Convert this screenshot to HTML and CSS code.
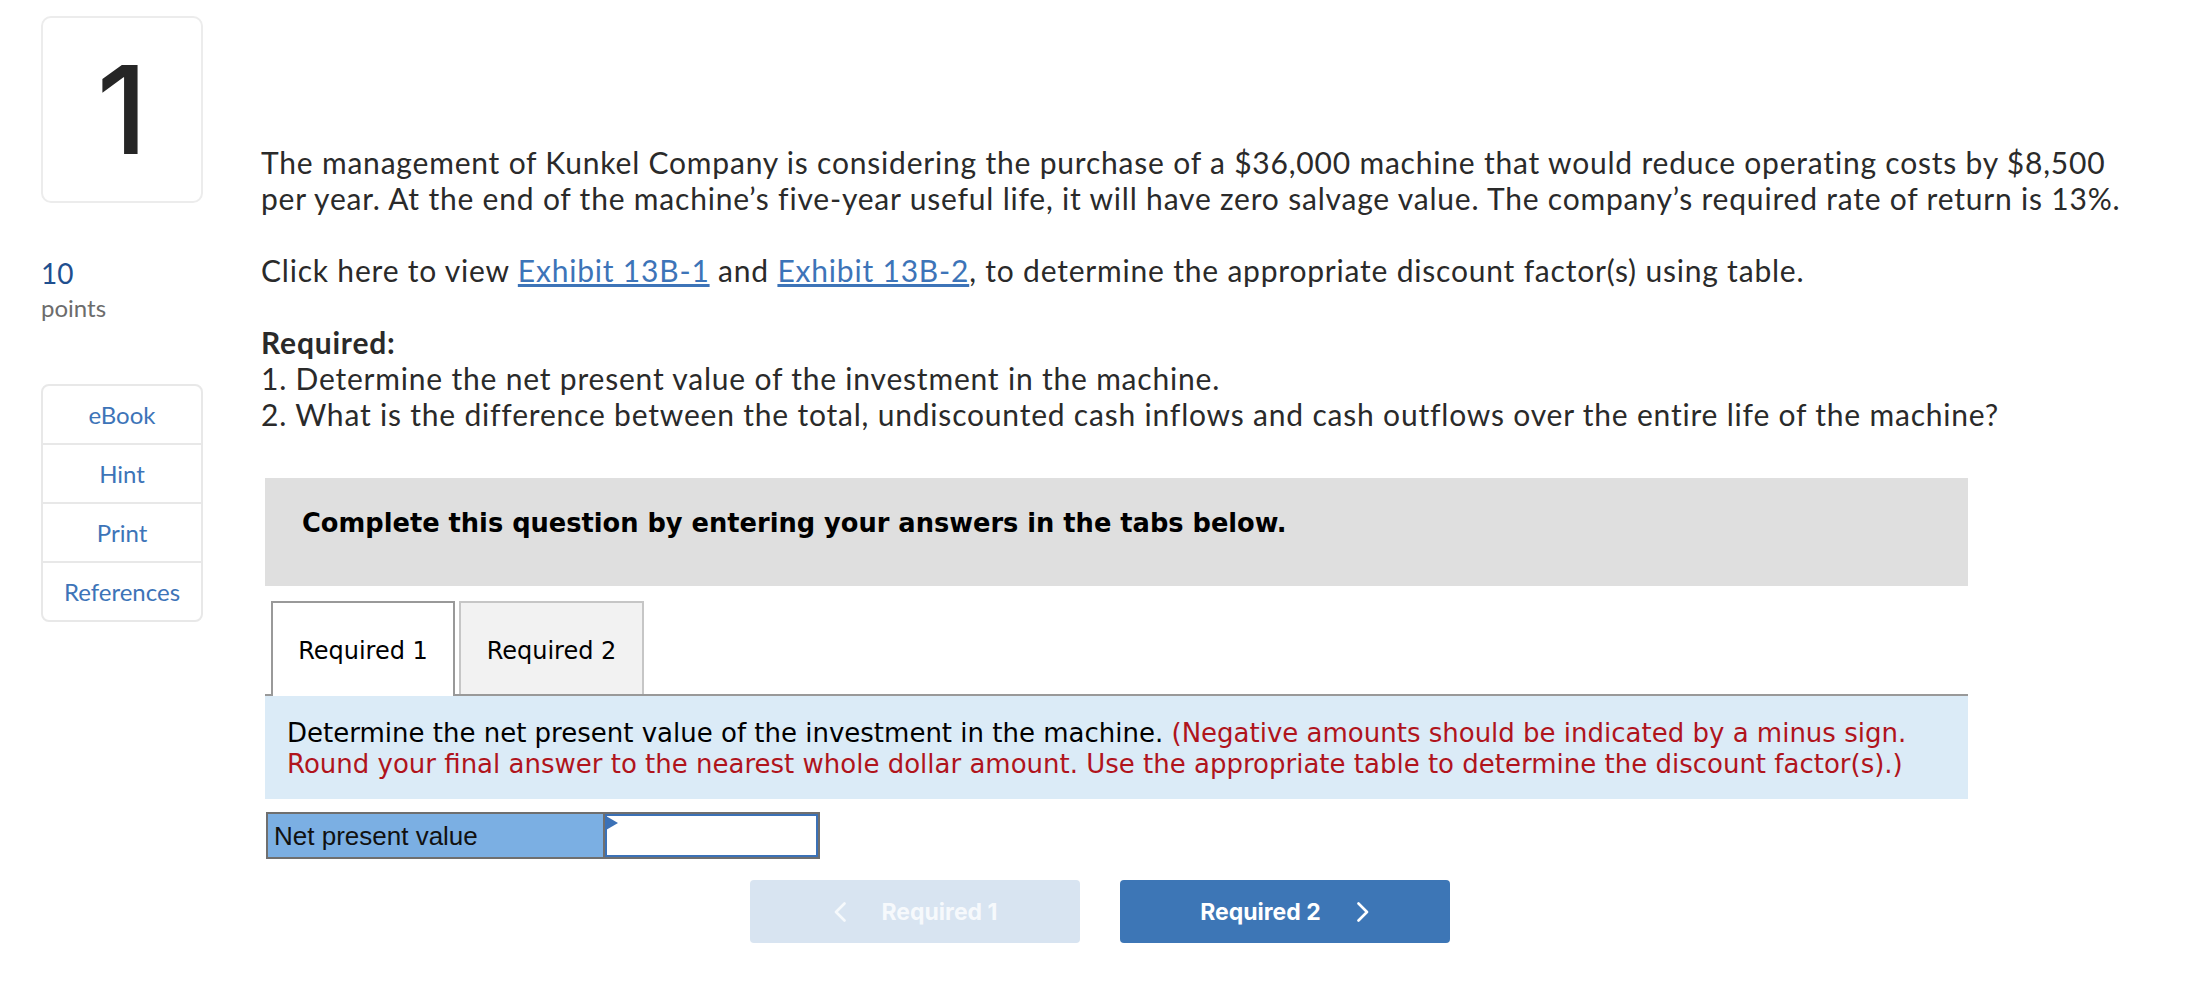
FILE: index.html
```html
<!DOCTYPE html>
<html lang="en">
<head>
<meta charset="utf-8">
<title>Question 1</title>
<link rel="stylesheet" href="styles.css">
</head>
<body>
<div class="page">
  <aside class="side">
    <div class="qnum">1</div>
    <div class="points">
      <div class="pts-num">10</div>
      <div class="pts-label">points</div>
    </div>
    <ul class="tools">
      <li>eBook</li>
      <li>Hint</li>
      <li>Print</li>
      <li>References</li>
    </ul>
  </aside>
  <main class="main">
    <div class="question">
      <p>The management of Kunkel Company is considering the purchase of a $36,000 machine that would reduce operating costs by $8,500<br>per year. At the end of the machine’s five-year useful life, it will have zero salvage value. The company’s required rate of return is 13%.</p>
      <p>Click here to view <a href="#" class="link">Exhibit 13B-1</a> and <a href="#" class="link">Exhibit 13B-2</a>, to determine the appropriate discount factor(s) using table.</p>
      <p><strong>Required:</strong><br>1. Determine the net present value of the investment in the machine.<br>2. What is the difference between the total, undiscounted cash inflows and cash outflows over the entire life of the machine?</p>
    </div>
    <section class="answer">
      <div class="instructions">Complete this question by entering your answers in the tabs below.</div>
      <div class="tabs">
        <div class="tab active">Required 1</div>
        <div class="tab">Required 2</div>
      </div>
      <div class="panel">
        <p>Determine the net present value of the investment in the machine. <span class="red">(Negative amounts should be indicated by a minus sign.</span><br><span class="red">Round your final answer to the nearest whole dollar amount. Use the appropriate table to determine the discount factor(s).)</span></p>
      </div>
      <div class="npv">
        <div class="npv-label">Net present value</div>
        <div class="npv-input"><span class="flag"></span></div>
      </div>
      <div class="nav">
        <button class="btn prev" type="button">
          <svg class="chev" width="14" height="20" viewBox="0 0 14 20"><polyline points="11.5,1.5 3,10 11.5,18.5" fill="none" stroke="currentColor" stroke-width="2.6" stroke-linecap="round" stroke-linejoin="round"/></svg>
          <span>Required 1</span>
        </button>
        <button class="btn next" type="button">
          <span>Required 2</span>
          <svg class="chev" width="14" height="20" viewBox="0 0 14 20"><polyline points="2.5,1.5 11,10 2.5,18.5" fill="none" stroke="currentColor" stroke-width="2.6" stroke-linecap="round" stroke-linejoin="round"/></svg>
        </button>
      </div>
    </section>
  </main>
</div>
</body>
</html>
```

FILE: styles.css
```css
html, body {
  margin: 0;
  padding: 0;
  background: #ffffff;
}

body {
  font-family: "Lato", "Open Sans", sans-serif;
  color: #2a2a2a;
}

.page {
  display: flex;
  align-items: flex-start;
  padding-left: 41px;
}

/* ---------- sidebar ---------- */
.side {
  width: 162px;
  flex: none;
  padding-top: 16px;
}

.qnum {
  box-sizing: border-box;
  height: 187px;
  border: 2px solid #ececec;
  border-radius: 10px;
  display: flex;
  align-items: center;
  justify-content: center;
  font-family: "Inter", "Open Sans", sans-serif;
  font-weight: 500;
  font-size: 122px;
  line-height: 1;
  color: #262626;
}

.points {
  margin-top: 55px;
}

.pts-num {
  font-size: 28px;
  line-height: 30px;
  color: #1f4f8f;
}

.pts-label {
  margin-top: 5px;
  font-size: 24px;
  line-height: 30px;
  color: #6c6c6c;
}

.tools {
  list-style: none;
  margin: 61px 0 0;
  padding: 0;
  border: 2px solid #e8e8e8;
  border-radius: 8px;
}

.tools li {
  height: 57px;
  display: flex;
  align-items: center;
  justify-content: center;
  font-size: 24px;
  color: #3d74b8;
  border-top: 2px solid #e8e8e8;
}

.tools li:first-child {
  border-top: none;
}

/* ---------- main ---------- */
.main {
  flex: 1;
  margin-left: 58px;
  padding-top: 144px;
}

.question p {
  margin: 0 0 36px;
  font-family: "Lato", "Open Sans", sans-serif;
  font-size: 30px;
  line-height: 36px;
  letter-spacing: 0.8px;
  color: #2a2a2a;
}

.question p:last-child {
  margin-bottom: 0;
}

.question strong {
  font-weight: 700;
}

.link {
  color: #3d74b8;
  text-decoration: underline;
}

.answer {
  margin-top: 46px;
  margin-left: 4px;
  width: 1703px;
}

.instructions {
  background: #dfdfdf;
  padding: 30px 20px 48px 37px;
  font-family: "DejaVu Sans", Verdana, sans-serif;
  font-weight: 700;
  font-size: 25.7px;
  line-height: 30px;
  color: #000;
}

.tabs {
  margin-top: 15px;
  display: flex;
  align-items: flex-start;
  gap: 4px;
  padding-left: 6px;
  border-bottom: 2px solid #999999;
  height: 93px;
}

.tab {
  box-sizing: border-box;
  width: 185px;
  height: 93px;
  display: flex;
  align-items: center;
  justify-content: center;
  padding-top: 4px;
  font-family: "DejaVu Sans", Verdana, sans-serif;
  font-size: 24px;
  color: #000;
  background: #f2f2f2;
  border: 2px solid #c6c6c6;
  border-bottom: none;
}

.tab.active {
  width: 184px;
  height: 95px;
  padding-bottom: 2px;
  background: #ffffff;
  border-color: #999999;
  position: relative;
  z-index: 1;
}

.panel {
  background: #dbebf7;
  padding: 22px 22px 20px 22px;
}

.panel p {
  margin: 0;
  font-family: "DejaVu Sans", Verdana, sans-serif;
  font-size: 26px;
  line-height: 30.5px;
  color: #000;
}

.red {
  color: #b0141c;
}

.npv {
  margin-top: 13px;
  margin-left: 1px;
  box-sizing: border-box;
  width: 554px;
  height: 47px;
  display: flex;
  border: 2px solid #6f6f6f;
}

.npv-label {
  box-sizing: border-box;
  width: 337px;
  flex: none;
  background: #7bafe3;
  border-right: 2px solid #6f6f6f;
  padding: 2px 0 0 6px;
  font-family: "Liberation Sans", Arial, sans-serif;
  font-size: 26px;
  line-height: 41px;
  color: #111;
}

.npv-input {
  flex: 1;
  position: relative;
  background: #fff;
  border: 2px solid #3b71b6;
}

.flag {
  position: absolute;
  left: -1px;
  top: 0;
  width: 0;
  height: 0;
  border-left: 12px solid #3b71b6;
  border-top: 7px solid transparent;
  border-bottom: 7px solid transparent;
}

.nav {
  margin-top: 21px;
  display: flex;
  justify-content: center;
  gap: 40px;
  padding-right: 33px;
}

.btn {
  width: 330px;
  height: 63px;
  border: none;
  border-radius: 4px;
  display: inline-flex;
  align-items: center;
  justify-content: center;
  gap: 35px;
  font-family: "Inter", "Roboto", sans-serif;
  font-weight: 700;
  font-size: 23px;
  padding: 0;
  cursor: pointer;
}

.btn.prev {
  background: #d8e4f1;
  color: #f6f9fc;
}

.btn.next {
  background: #3d76b6;
  color: #ffffff;
}

.chev {
  display: block;
}
```
